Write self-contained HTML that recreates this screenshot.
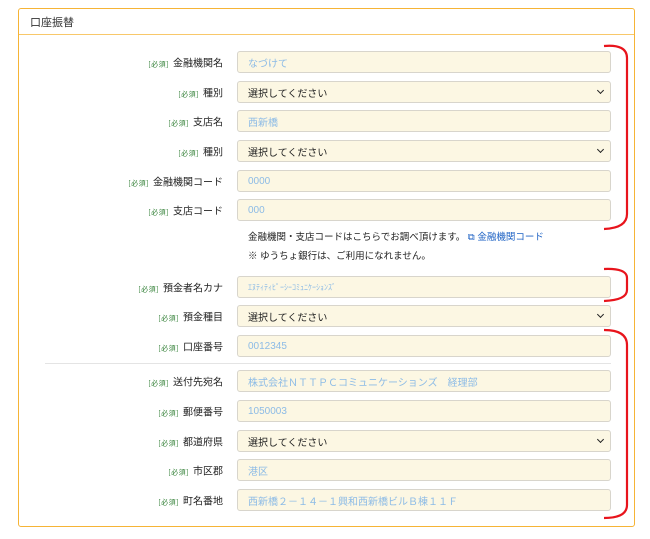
<!DOCTYPE html>
<html><head><meta charset="utf-8"><style>
body{margin:0;width:650px;height:539px;background:#fff;font-family:"Liberation Sans","Noto Sans CJK JP",sans-serif;position:relative;overflow:hidden}
.panel{position:absolute;left:18px;top:8px;width:617px;height:519px;border:1px solid #f6b436;border-radius:3px;box-sizing:border-box}
.hd{position:absolute;left:0;top:0;right:0;height:25px;border-bottom:1px solid #f8c86a;font-size:11px;color:#333;display:flex;align-items:center;padding-left:11px;font-family:"Noto Sans CJK JP",sans-serif}
.lab{position:absolute;right:427px;font-size:10px;color:#222;white-space:nowrap;transform:translateY(-50%);font-family:"Noto Sans CJK JP",sans-serif}
.lab small{font-size:7px;color:#2e7d32;margin-right:4px;letter-spacing:0.5px}
.in{position:absolute;left:237px;width:374px;height:22px;background:#fcf7e3;border:1px solid #d8d5cc;border-radius:3px;box-sizing:border-box;font-size:10px;display:flex;align-items:center;padding-left:10px;color:#8cbbe6}
.sel{color:#222}
.sel:after{content:"";position:absolute;right:7px;top:6px;width:4px;height:4px;border-right:1.5px solid #222;border-bottom:1.5px solid #222;transform:rotate(45deg)}
.t{position:absolute;left:248px;font-size:9.5px;color:#222}
.t a{color:#1e62c4;text-decoration:none}
</style></head><body>
<div class="panel"><div class="hd">口座振替</div></div>
<div class="lab" style="top:62px"><small>[必須]</small>金融機関名</div><div class="in" style="top:51px">なづけて</div>
<div class="lab" style="top:92px"><small>[必須]</small>種別</div><div class="in sel" style="top:81px">選択してください</div>
<div class="lab" style="top:121px"><small>[必須]</small>支店名</div><div class="in" style="top:110px">西新橋</div>
<div class="lab" style="top:151px"><small>[必須]</small>種別</div><div class="in sel" style="top:140px">選択してください</div>
<div class="lab" style="top:181px"><small>[必須]</small>金融機関コード</div><div class="in" style="top:170px">0000</div>
<div class="lab" style="top:210px"><small>[必須]</small>支店コード</div><div class="in" style="top:199px">000</div>
<div class="t" style="top:229px">金融機関・支店コードはこちらでお調べ頂けます。 <a>⧉ 金融機関コード</a></div>
<div class="t" style="top:248px">※ ゆうちょ銀行は、ご利用になれません。</div>
<div class="lab" style="top:287px"><small>[必須]</small>預金者名カナ</div><div class="in" style="top:276px;font-size:8px">ｴﾇﾃｨﾃｨﾋﾟｰｼｰｺﾐｭﾆｹｰｼｮﾝｽﾞ</div>
<div class="lab" style="top:316px"><small>[必須]</small>預金種目</div><div class="in sel" style="top:305px">選択してください</div>
<div class="lab" style="top:346px"><small>[必須]</small>口座番号</div><div class="in" style="top:335px">0012345</div>
<div style="position:absolute;left:45px;top:363px;width:566px;height:1px;background:#e4e4e4"></div>
<div class="lab" style="top:381px"><small>[必須]</small>送付先宛名</div><div class="in" style="top:370px">株式会社ＮＴＴＰＣコミュニケーションズ　経理部</div>
<div class="lab" style="top:411px"><small>[必須]</small>郵便番号</div><div class="in" style="top:400px">1050003</div>
<div class="lab" style="top:441px"><small>[必須]</small>都道府県</div><div class="in sel" style="top:430px">選択してください</div>
<div class="lab" style="top:470px"><small>[必須]</small>市区郡</div><div class="in" style="top:459px">港区</div>
<div class="lab" style="top:500px"><small>[必須]</small>町名番地</div><div class="in" style="top:489px">西新橋２－１４－１興和西新橋ビルＢ棟１１Ｆ</div>
<svg style="position:absolute;left:0;top:0" width="650" height="539" fill="none" stroke="#e8141c" stroke-width="2.2">
<path d="M604 46 Q627 44 627 58 L627 214 Q627 228 604 229"/>
<path d="M604 269 Q627 268 627 278 L627 290 Q627 300 604 301"/>
<path d="M604 330 Q627 330 627 345 L627 505 Q627 518 604 518"/>
</svg>
</body></html>
